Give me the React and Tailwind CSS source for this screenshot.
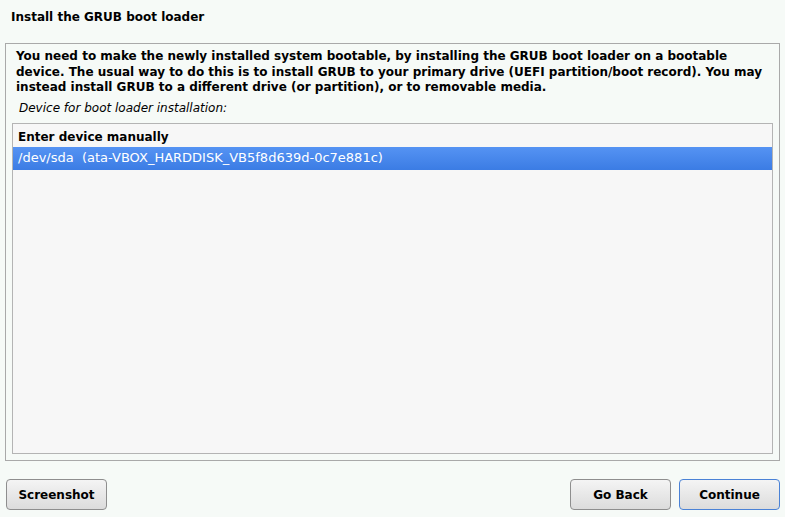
export default function App() {
  return (
    <div
      className="w-[785px] h-[517px] bg-[#f6faf7] text-black flex flex-col overflow-hidden"
      style={{ fontFamily: '"DejaVu Sans", sans-serif' }}
    >
      {/* Title */}
      <div className="h-[43px] pl-[11px] pt-[9px] text-[12px] font-bold leading-[16px]">
        Install the GRUB boot loader
      </div>

      {/* Main frame */}
      <div className="mx-[5px] h-[418px] border border-[#a9a9a9] flex flex-col px-[6px] pb-[6px]">
        <p className="pt-[5px] pl-[4px] text-[12px] font-bold leading-[15.5px]">
          You need to make the newly installed system bootable, by installing the GRUB boot loader on a bootable
          device. The usual way to do this is to install GRUB to your primary drive (UEFI partition/boot record). You may
          instead install GRUB to a different drive (or partition), or to removable media.
        </p>
        <div className="pl-[7px] pt-[4px] pb-[7px] text-[12px] italic leading-[16px]">
          Device for boot loader installation:
        </div>

        <div className="flex-1 border border-[#b4b4b4] bg-[#f7f7f7] pt-[3px]">
          <div className="h-[20px] pl-[5px] flex items-center text-[12px] font-bold">
            Enter device manually
          </div>
          <div className="h-[23px] pl-[5px] flex items-center text-[13px] text-white bg-gradient-to-b from-[#5593f3] to-[#3b7ce4] whitespace-pre">
            /dev/sda  (ata-VBOX_HARDDISK_VB5f8d639d-0c7e881c)
          </div>
        </div>
      </div>

      {/* Buttons */}
      <div className="flex items-center pl-[6px] pr-[5px] pt-[18px] gap-[8px]">
        <button className="w-[101px] h-[31px] rounded-[4px] border border-[#8e8e8e] bg-gradient-to-b from-[#f4f4f4] to-[#dcdcdc] text-[12px] font-bold">
          Screenshot
        </button>
        <div className="flex-1" />
        <button className="w-[101px] h-[31px] rounded-[4px] border border-[#8e8e8e] bg-gradient-to-b from-[#f4f4f4] to-[#dcdcdc] text-[12px] font-bold">
          Go Back
        </button>
        <button className="w-[101px] h-[31px] rounded-[4px] border border-[#4a82d6] bg-gradient-to-b from-[#f4f4f4] to-[#dcdcdc] text-[12px] font-bold">
          Continue
        </button>
      </div>
    </div>
  );
}
